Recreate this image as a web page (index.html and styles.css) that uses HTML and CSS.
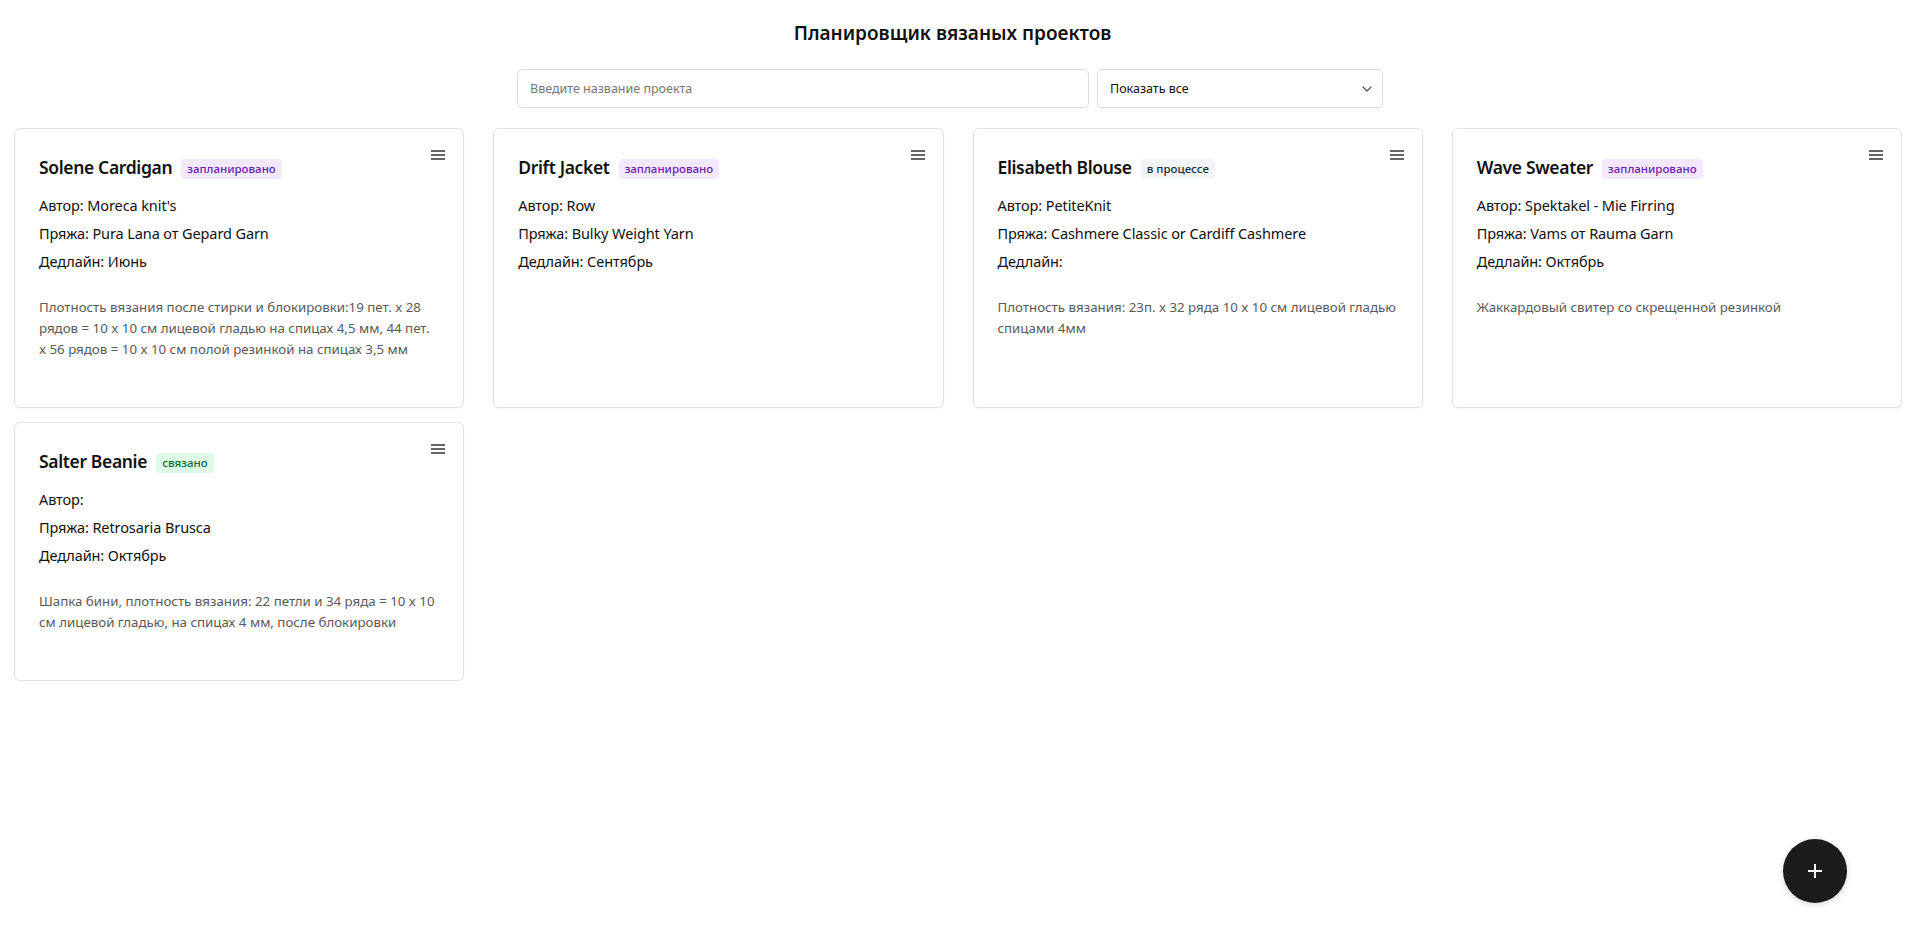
FILE: index.html
```html
<!DOCTYPE html>
<html lang="ru">
<head>
<meta charset="utf-8">
<title>Планировщик вязаных проектов</title>
<link rel="stylesheet" href="styles.css">
</head>
<body>
<header class="page-header">
  <h1 class="page-title">Планировщик вязаных проектов</h1>
  <div class="controls">
    <input class="search" type="text" placeholder="Введите название проекта">
    <div class="select-wrap">
      <select class="filter">
        <option>Показать все</option>
      </select>
      <svg class="chevron" width="10" height="6" viewBox="0 0 10 6"><path d="M1 1l4 4 4-4" fill="none" stroke="#555" stroke-width="1.2" stroke-linecap="round" stroke-linejoin="round"/></svg>
    </div>
  </div>
</header>

<main class="grid">
  <article class="card">
    <button class="menu" aria-label="меню"><svg width="14" height="10" viewBox="0 0 14 10"><rect y="0" width="14" height="2" fill="#666"/><rect y="4" width="14" height="2" fill="#666"/><rect y="8" width="14" height="2" fill="#666"/></svg></button>
    <div class="card-head">
      <h2 class="card-title">Solene Cardigan</h2>
      <span class="badge badge-planned">запланировано</span>
    </div>
    <div class="info">
      <p>Автор: Moreca knit's</p>
      <p>Пряжа: Pura Lana от Gepard Garn</p>
      <p>Дедлайн: Июнь</p>
    </div>
    <p class="desc">Плотность вязания после стирки и блокировки:19 пет. x 28 рядов = 10 x 10 см лицевой гладью на спицах 4,5 мм, 44 пет. x 56 рядов = 10 x 10 см полой резинкой на спицах 3,5 мм</p>
  </article>

  <article class="card">
    <button class="menu" aria-label="меню"><svg width="14" height="10" viewBox="0 0 14 10"><rect y="0" width="14" height="2" fill="#666"/><rect y="4" width="14" height="2" fill="#666"/><rect y="8" width="14" height="2" fill="#666"/></svg></button>
    <div class="card-head">
      <h2 class="card-title">Drift Jacket</h2>
      <span class="badge badge-planned">запланировано</span>
    </div>
    <div class="info">
      <p>Автор: Row</p>
      <p>Пряжа: Bulky Weight Yarn</p>
      <p>Дедлайн: Сентябрь</p>
    </div>
  </article>

  <article class="card">
    <button class="menu" aria-label="меню"><svg width="14" height="10" viewBox="0 0 14 10"><rect y="0" width="14" height="2" fill="#666"/><rect y="4" width="14" height="2" fill="#666"/><rect y="8" width="14" height="2" fill="#666"/></svg></button>
    <div class="card-head">
      <h2 class="card-title">Elisabeth Blouse</h2>
      <span class="badge badge-progress">в процессе</span>
    </div>
    <div class="info">
      <p>Автор: PetiteKnit</p>
      <p>Пряжа: Cashmere Classic or Cardiff Cashmere</p>
      <p>Дедлайн: </p>
    </div>
    <p class="desc">Плотность вязания: 23п. x 32 ряда 10 x 10 см лицевой гладью спицами 4мм</p>
  </article>

  <article class="card">
    <button class="menu" aria-label="меню"><svg width="14" height="10" viewBox="0 0 14 10"><rect y="0" width="14" height="2" fill="#666"/><rect y="4" width="14" height="2" fill="#666"/><rect y="8" width="14" height="2" fill="#666"/></svg></button>
    <div class="card-head">
      <h2 class="card-title">Wave Sweater</h2>
      <span class="badge badge-planned">запланировано</span>
    </div>
    <div class="info">
      <p>Автор: Spektakel - Mie Firring</p>
      <p>Пряжа: Vams от Rauma Garn</p>
      <p>Дедлайн: Октябрь</p>
    </div>
    <p class="desc">Жаккардовый свитер со скрещенной резинкой</p>
  </article>

  <article class="card">
    <button class="menu" aria-label="меню"><svg width="14" height="10" viewBox="0 0 14 10"><rect y="0" width="14" height="2" fill="#666"/><rect y="4" width="14" height="2" fill="#666"/><rect y="8" width="14" height="2" fill="#666"/></svg></button>
    <div class="card-head">
      <h2 class="card-title">Salter Beanie</h2>
      <span class="badge badge-done">связано</span>
    </div>
    <div class="info">
      <p>Автор: </p>
      <p>Пряжа: Retrosaria Brusca</p>
      <p>Дедлайн: Октябрь</p>
    </div>
    <p class="desc">Шапка бини, плотность вязания: 22 петли и 34 ряда = 10 x 10 см лицевой гладью, на спицах 4 мм, после блокировки</p>
  </article>
</main>

<button class="fab" aria-label="Добавить проект"><svg width="16" height="16" viewBox="0 0 16 16"><path d="M8 1v14M1 8h14" stroke="#fff" stroke-width="2" fill="none"/></svg></button>
</body>
</html>
```

FILE: styles.css
```css
* { box-sizing: border-box; }

html, body {
  margin: 0;
  padding: 0;
  background: #ffffff;
}

body {
  font-family: "Noto Sans", "Open Sans", sans-serif;
  color: #111111;
}

.page-header {
  padding-top: 19px;
  display: flex;
  flex-direction: column;
  align-items: center;
}

.page-title {
  margin: 0;
  font-size: 19px;
  line-height: 28px;
  font-weight: 600;
  color: #111111;
}

.controls {
  margin-top: 22px;
  display: flex;
  gap: 8px;
  margin-left: -5px;
}

.search {
  width: 572px;
  height: 39px;
  border: 1px solid #dcdcdc;
  border-radius: 5px;
  padding: 0 12px;
  font-family: inherit;
  font-size: 12.5px;
  color: #111;
  outline: none;
}

.search::placeholder {
  color: #767676;
}

.select-wrap {
  position: relative;
  width: 286px;
  height: 39px;
}

.filter {
  appearance: none;
  -webkit-appearance: none;
  width: 100%;
  height: 100%;
  border: 1px solid #dcdcdc;
  border-radius: 5px;
  padding: 0 12px;
  background: #fff;
  font-family: inherit;
  font-size: 12.5px;
  color: #111;
}

.chevron {
  position: absolute;
  right: 11px;
  top: 17px;
  pointer-events: none;
}

.grid {
  margin: 20px 0 0 14px;
  width: 1888px;
  display: grid;
  grid-template-columns: repeat(4, 1fr);
  gap: 14px 29px;
  align-items: stretch;
}

.card {
  position: relative;
  border: 1px solid #e2e2e2;
  border-radius: 6px;
  padding: 24px 24px 24px 24px;
  background: #fff;
  box-shadow: 0 1px 2px rgba(0, 0, 0, 0.03);
}

.menu {
  position: absolute;
  top: 19px;
  right: 16px;
  width: 18px;
  height: 14px;
  padding: 0;
  border: 0;
  background: transparent;
  display: flex;
  align-items: center;
  justify-content: center;
}

.card-head {
  display: flex;
  align-items: center;
  gap: 9px;
  height: 28px;
}

.card-title {
  margin: 0;
  font-size: 17.5px;
  letter-spacing: -0.35px;
  line-height: 28px;
  font-weight: 600;
  color: #111;
}

.badge {
  display: inline-flex;
  align-items: center;
  height: 20px;
  padding: 0 6px;
  border-radius: 4px;
  font-size: 11.5px;
  font-weight: 500;
  margin-top: 3px;
}

.badge-planned {
  background: #f3e8ff;
  color: #6b21a8;
}

.badge-progress {
  background: #f3f4f6;
  color: #1f2937;
}

.badge-done {
  background: #dcfce7;
  color: #166534;
}

.info {
  margin-top: 12px;
  display: flex;
  flex-direction: column;
  gap: 4px;
}

.info p {
  margin: 0;
  font-size: 14.5px;
  letter-spacing: -0.1px;
  line-height: 24px;
  min-height: 24px;
  color: #111;
}

.desc {
  margin: 24px 0 23px;
  font-size: 13.3px;
  line-height: 21px;
  color: #5a5a5a;
}

.fab {
  position: fixed;
  right: 58px;
  bottom: 24px;
  width: 64px;
  height: 64px;
  border-radius: 50%;
  border: 0;
  background: #1c1c1e;
  display: flex;
  align-items: center;
  justify-content: center;
  box-shadow: 0 2px 6px rgba(0, 0, 0, 0.15);
}
```
